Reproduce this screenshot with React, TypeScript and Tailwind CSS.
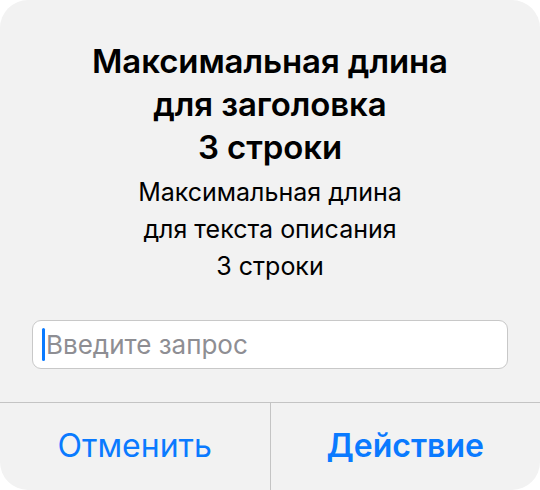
import React from "react";

export default function App() {
  return (
    <div className="w-[540px] h-[490px] bg-white" style={{ fontFamily: "Inter, 'Noto Sans', sans-serif" }}>
      <div className="w-full h-full bg-[#f2f2f2] rounded-[28px] flex flex-col overflow-hidden">
        <div className="flex flex-col items-center pt-[40px]">
          <div className="text-[33px] leading-[43px] font-semibold text-black text-center tracking-[-0.1px]">
            <div>Максимальная длина</div>
            <div>для заголовка</div>
            <div>3 строки</div>
          </div>
          <div className="mt-[5px] text-[25px] leading-[37px] text-black text-center">
            <div>Максимальная длина</div>
            <div>для текста описания</div>
            <div>3 строки</div>
          </div>
        </div>
        <div className="px-[32px] mt-[35px]">
          <div className="h-[49px] bg-white border border-[#c8c8c8] rounded-[9px] flex items-center pl-[9px]">
            <div className="w-[3px] h-[33px] bg-[#0a7aff] rounded-full" />
            <span className="text-[26px] text-[#8e8e93] ml-[1px]">Введите запрос</span>
          </div>
        </div>
        <div className="mt-[33px] border-t border-[#c4c4c4] flex flex-1">
          <div className="flex-1 flex items-center justify-center text-[32px] text-[#0a7aff] pb-[2px]">Отменить</div>
          <div className="w-px bg-[#c4c4c4]" />
          <div className="flex-1 flex items-center justify-center text-[32px] font-semibold text-[#0a7aff] pb-[2px]">Действие</div>
        </div>
      </div>
    </div>
  );
}
